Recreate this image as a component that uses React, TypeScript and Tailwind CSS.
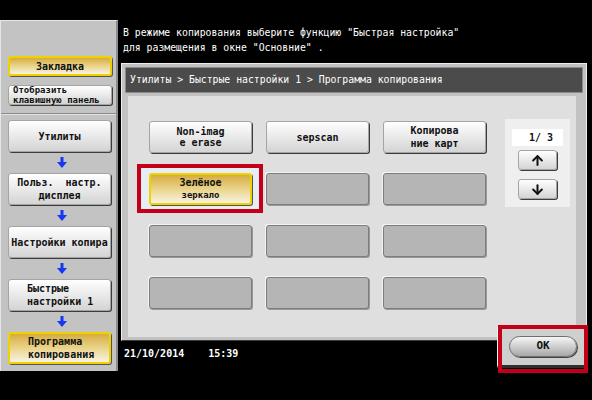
import { ArrowUp, ArrowDown } from "lucide-react";

/* panel style helpers */
const whiteBtn =
  "rounded-[3px] border border-[#a4a4a4] bg-linear-to-b from-[#ffffff] to-[#d4d4d4] shadow-[1px_1px_0_#3c3c3c] text-[#111]";
const yellowBtn =
  "rounded-[3px] border-2 border-[#f0d200] bg-linear-to-b from-[#d6ac3c] via-[#ead48a] to-[#f8f2e2] shadow-[1px_1px_0_#555] text-[#111]";
const emptyBtn =
  "rounded-[3px] border border-[#7c7c7c] bg-[#b5b5b5] shadow-[1px_1px_0_#999,-1px_-1px_0_#f4f4f4]";

function BlueArrow() {
  return (
    <div className="h-[21px] flex items-center justify-center">
      <svg width="10" height="11" viewBox="0 0 10 11">
        <rect x="3.5" y="0" width="3" height="6" fill="#1638f2" />
        <polygon points="0,5 10,5 5,11" fill="#1638f2" />
      </svg>
    </div>
  );
}

function NavButton({
  lines,
  active,
  align = "center",
}: {
  lines: string[];
  active?: boolean;
  align?: "center" | "left";
}) {
  return (
    <div
      className={`h-[32px] w-[103px] flex flex-col justify-center font-bold text-[10px] leading-[13px] ${
        align === "left" ? "items-start pl-[18px]" : "items-center"
      } ${active ? yellowBtn : whiteBtn}`}
    >
      {lines.map((l) => (
        <span key={l} className="whitespace-pre">
          {l}
        </span>
      ))}
    </div>
  );
}

function Sidebar() {
  return (
    <aside className="mt-[20px] w-[118px] h-[351px] shrink-0 bg-[#c3c3c3] border-l border-t border-[#e6e6e6] border-r-2 border-r-[#8c8c8c] flex flex-col">
      <div className="pl-[7px] pt-[35px] flex flex-col gap-[9px]">
        <div
          className={`h-[20px] w-[104px] flex items-center justify-center font-bold text-[10px] ${yellowBtn}`}
        >
          Закладка
        </div>
        <div
          className={`h-[20px] w-[104px] flex flex-col justify-center pl-[4px] font-bold text-[9px] leading-[10px] ${whiteBtn}`}
        >
          <span>Отобразить</span>
          <span className="whitespace-pre">клавишную панель</span>
        </div>
      </div>
      <div className="mt-[8px] h-[2px] border-t border-[#8a8a8a] bg-[#e2e2e2]" />
      <div className="pl-[7px] pt-[5px] flex flex-col">
        <NavButton lines={["Утилиты"]} />
        <BlueArrow />
        <NavButton lines={["Польз.  настр.", "дисплея"]} />
        <BlueArrow />
        <NavButton lines={["Настройки копира"]} />
        <BlueArrow />
        <NavButton lines={["Быстрые", "настройки 1"]} align="left" />
        <BlueArrow />
        <NavButton lines={["Программа", "копирования"]} align="left" active />
      </div>
    </aside>
  );
}

function Grid() {
  return (
    <div className="grid grid-cols-[repeat(3,103px)] grid-rows-[repeat(4,32px)] gap-x-[14px] gap-y-[20px]">
      <div className={`flex flex-col items-center justify-center text-[10px] font-bold leading-[11px] ${whiteBtn}`}>
        <span>Non-imag</span>
        <span>e erase</span>
      </div>
      <div className={`flex items-center justify-center text-[10px] font-bold ${whiteBtn}`}>
        sepscan
      </div>
      <div className={`flex flex-col items-center justify-center text-[10px] font-bold leading-[13px] ${whiteBtn}`}>
        <span>Копирова</span>
        <span>ние карт</span>
      </div>

      <div className="relative">
        <div className="absolute left-[-12px] top-[-9px] w-[126px] h-[49px] border-4 border-[#c20018] bg-[#e6edf4]" />
        <div
          className={`relative h-full flex flex-col items-center justify-center text-[10px] font-bold leading-[12px] ${yellowBtn}`}
        >
          <span>Зелёное</span>
          <span className="text-[9px]">зеркало</span>
        </div>
      </div>
      <div className={emptyBtn} />
      <div className={emptyBtn} />

      <div className={emptyBtn} />
      <div className={emptyBtn} />
      <div className={emptyBtn} />

      <div className={emptyBtn} />
      <div className={emptyBtn} />
      <div className={emptyBtn} />
    </div>
  );
}

function Pager() {
  return (
    <div className="ml-[19px] mt-[-2px] w-[65px] h-[88px] bg-[#efefef] flex flex-col items-center">
      <div className="mt-[10px] w-[51px] h-[17px] bg-white flex items-center justify-end pr-[10px] text-[10px] font-bold text-[#111] whitespace-pre">
        1/ 3
      </div>
      <div
        className={`mt-[4px] w-[39px] h-[20px] flex items-center justify-center ${whiteBtn}`}
      >
        <ArrowUp size={15} strokeWidth={3.2} color="#111" />
      </div>
      <div
        className={`mt-[9px] w-[39px] h-[20px] flex items-center justify-center ${whiteBtn}`}
      >
        <ArrowDown size={15} strokeWidth={3.2} color="#111" />
      </div>
    </div>
  );
}

export default function App() {
  return (
    <div className="relative w-[592px] h-[400px] bg-black overflow-hidden flex font-['DejaVu_Sans_Mono',monospace]">
      <Sidebar />

      <div className="pl-[3px] pt-[25px] flex flex-col">
        {/* Instruction */}
        <div className="pl-[2px] text-[9.8px] leading-[15px] text-white whitespace-pre">
          <div>В режиме копирования выберите функцию "Быстрая настройка"</div>
          <div>для размещения в окне "Основние" .</div>
        </div>

        {/* Main panel */}
        <div className="mt-[8px] w-[466px] h-[278px] bg-[#c2c2c2] border border-[#ececec] border-b-[#3a3a3a] p-[3px] flex flex-col">
          <div className="h-[26px] bg-[#4b4b4b] border border-[#8a8a8a] flex items-center pl-[4px] text-[9.8px] text-white whitespace-pre">
            Утилиты &gt; Быстрые настройки 1 &gt; Программа копирования
          </div>
          <div className="mt-[3px] ml-[3px] mr-[7px] flex-1 bg-[#dfdfdf] flex pl-[21px] pt-[25px]">
            <Grid />
            <Pager />
          </div>
        </div>

        {/* Status */}
        <div className="mt-[5px] pl-[3px] text-[10px] leading-[15px] font-bold text-white whitespace-pre">
          21/10/2014    15:39
        </div>
      </div>

      {/* OK tab */}
      <div className="absolute left-[497px] top-[327px] w-[91px] h-[41px] bg-[#cfcfcf] border-l border-t border-[#f2f2f2] border-b-[3px] border-b-[#303030]" />
      <div className="absolute left-[498px] top-[325px] w-[90px] h-[48px] border-4 border-[#c20018] flex items-center justify-center pb-[6px]">
        <div className="w-[68px] h-[21px] rounded-full border border-[#6e6e6e] bg-linear-to-b from-[#f6f6f6] to-[#a8a8a8] shadow-[1px_1px_0_#444] flex items-center justify-center text-[11px] font-bold text-[#111]">
          OK
        </div>
      </div>
    </div>
  );
}
